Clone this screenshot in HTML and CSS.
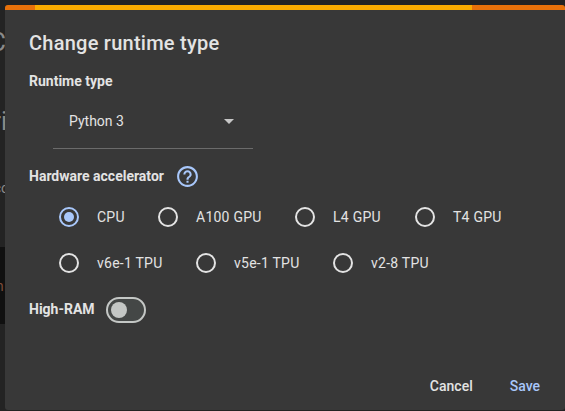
FILE: index.html
```html
<!DOCTYPE html>
<html lang="en">
<head>
<meta charset="utf-8">
<title>Change runtime type</title>
<link rel="stylesheet" href="styles.css">
</head>
<body>
<div class="backdrop" aria-hidden="true">
  <span class="peek peek-title">C</span>
  <span class="peek peek-heading">ri</span>
  <span class="peek peek-text">co</span>
  <div class="code"><span class="peek peek-code">n</span></div>
</div>
<main class="dialog">
  <div class="progress"><div class="progress-bar"></div></div>
  <h1 class="title">Change runtime type</h1>
  <h2 class="label runtime">Runtime type</h2>
  <div class="select"><span>Python 3</span><svg width="10" height="5" viewBox="0 0 10 5"><path d="M0 0h10L5 5z" fill="#c7c7c7"/></svg></div>
  <div class="accelerator">
    <h2 class="label">Hardware accelerator</h2>
    <svg class="help" width="25" height="25" viewBox="0 0 24 24"><path fill="#a8c7fa" d="M11 18h2v-2h-2v2zm1-16C6.48 2 2 6.48 2 12s4.480 10 10 10 10-4.480 10-10S17.520 2 12 2zm0 18c-4.410 0-8-3.590-8-8s3.590-8 8-8 8 3.590 8 8-3.590 8-8 8zm0-14c-2.210 0-4 1.790-4 4h2c0-1.100.9-2 2-2s2 .9 2 2c0 2-3 1.750-3 5h2c0-2.250 3-2.500 3-5 0-2.210-1.790-4-4-4z"/></svg>
  </div>
  <div class="options first">
    <label class="option"><i class="radio checked"></i>CPU</label>
    <label class="option"><i class="radio"></i>A100 GPU</label>
    <label class="option"><i class="radio"></i>L4 GPU</label>
    <label class="option"><i class="radio"></i>T4 GPU</label>
  </div>
  <div class="options second">
    <label class="option"><i class="radio"></i>v6e-1 TPU</label>
    <label class="option"><i class="radio"></i>v5e-1 TPU</label>
    <label class="option"><i class="radio"></i>v2-8 TPU</label>
  </div>
  <div class="ram"><h2 class="label">High-RAM</h2><div class="switch"><i class="knob"></i></div></div>
  <div class="actions"><span>Cancel</span><span class="save">Save</span></div>
</main>
</body>
</html>
```

FILE: styles.css
```css
* { box-sizing: border-box; }
body {
  margin: 0;
  width: 565px;
  height: 411px;
  overflow: hidden;
  position: relative;
  background: #232323;
  color: #e3e3e3;
  font: 14px/20px Roboto, sans-serif;
}
h1, h2 { margin: 0; }
.backdrop {
  position: absolute;
  inset: 0 auto 0 0;
  width: 5px;
  overflow: hidden;
}
.peek { position: absolute; color: #8a8a8a; }
.peek-title { right: -1px; top: 27px; font-size: 26px; line-height: 30px; }
.peek-heading { right: -2px; top: 108px; font-size: 25px; line-height: 28px; }
.peek-text { right: -4px; top: 178px; font-size: 14px; }
.code {
  position: absolute;
  top: 247px;
  width: 5px;
  height: 77px;
  background: #101010;
}
.peek-code { right: 1px; top: 29px; color: #7e4d3b; font: 14px/20px "DejaVu Sans Mono", monospace; }
.dialog {
  position: relative;
  display: flex;
  flex-direction: column;
  margin: 5px 0 0 5px;
  height: 405px;
  padding: 0 24px;
  background: #383838;
  border-radius: 3px;
  overflow: hidden;
}
.progress { flex: none; height: 5px; margin: 0 -24px; background: #e8710a; }
.progress-bar { width: 437px; height: 5px; margin-left: 30px; background: #f9ab00; }
.title { margin-top: 17px; font-size: 20px; line-height: 32px; font-weight: 500; letter-spacing: .25px; }
.label { font-size: 14px; line-height: 20px; font-weight: 700; }
.runtime { margin-top: 12px; }
.select {
  display: flex;
  flex: none;
  align-items: center;
  justify-content: space-between;
  width: 200px;
  height: 56px;
  margin: 2px 0 0 24px;
  padding: 0 19px 0 16px;
  border-bottom: 1px solid #6b6b6b;
}
.select svg { position: relative; top: 1px; }
.accelerator { display: flex; align-items: center; gap: 11px; height: 24px; margin-top: 15px; }
.options { display: grid; height: 20px; margin-left: 30px; letter-spacing: .25px; }
.first { grid-template-columns: 99px 137px 120px auto; margin-top: 19px; }
.second { grid-template-columns: 137px 137px auto; margin-top: 26px; }
.option { display: flex; align-items: center; gap: 18px; white-space: nowrap; }
.radio { flex: none; width: 20px; height: 20px; border: 2px solid #e3e3e3; border-radius: 50%; }
.checked {
  display: grid;
  place-items: center;
  border-color: #a8c7fa;
}
.checked::after { content: ""; width: 10px; height: 10px; border-radius: 50%; background: #a8c7fa; }
.ram { display: flex; gap: 11px; height: 26px; margin-top: 24px; }
.ram .label { margin-top: 2px; }
.switch {
  display: flex;
  align-items: center;
  width: 40px;
  height: 26px;
  padding-left: 3px;
  border: 2px solid #c4c7c5;
  border-radius: 13px;
  background: #444746;
}
.knob { width: 16px; height: 16px; border-radius: 50%; background: #c4c7c5; }
.actions {
  display: flex;
  justify-content: flex-end;
  gap: 37px;
  margin-top: 53px;
  padding-right: 1px;
  font-weight: 500;
}
.save { color: #a8c7fa; }
```
